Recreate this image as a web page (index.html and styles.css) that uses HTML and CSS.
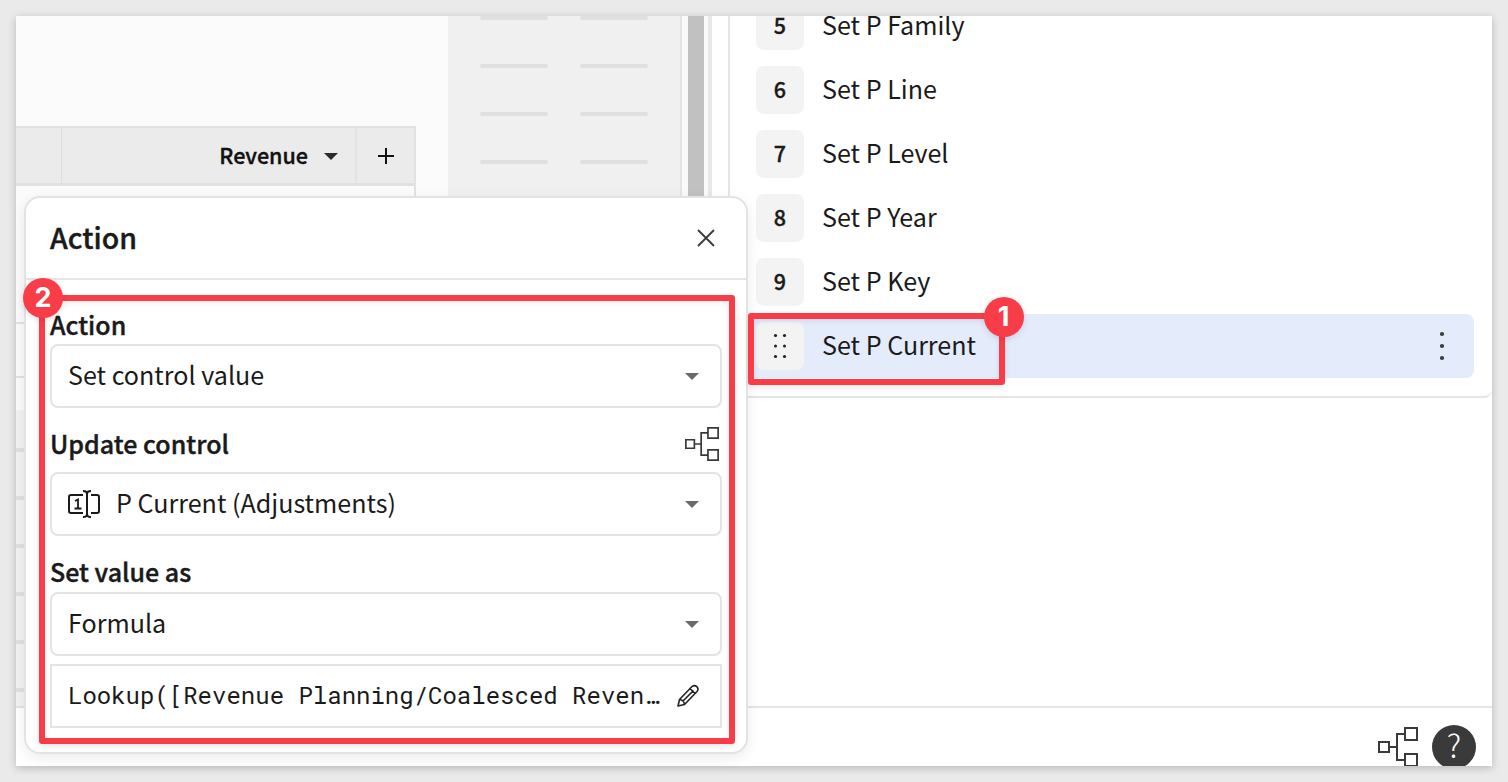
FILE: index.html
```html
<!DOCTYPE html>
<html lang="en">
<head>
<meta charset="utf-8">
<title>Workbook actions</title>
<link rel="stylesheet" href="styles.css">
</head>
<body>
<svg width="0" height="0" class="defs">
  <symbol id="caret" viewBox="0 0 14 7"><path d="M0 0h14L7 7z" fill="currentColor"/></symbol>
  <symbol id="lineage" viewBox="0 0 40 40"><path d="M1 15h10v10H1zM27 1h12v12H27zM27 27h12v12H27zM11 20h8M27 7h-8v26h8" fill="none" stroke="currentColor" stroke-width="2"/></symbol>
</svg>
<div class="frame">
  <div class="workspace">
    <div class="columns">
      <div class="canvas">
        <div class="table">
          <div class="thead">
            <div class="cell first"></div>
            <div class="cell name"><span>Revenue</span><svg class="caret dark"><use href="#caret"/></svg></div>
            <div class="cell add"><svg width="16" height="16" viewBox="0 0 16 16"><path d="M8 0v16M0 8h16" stroke="#111" stroke-width="2"/></svg></div>
          </div>
          <div class="tbody"><div class="row r1"></div><div class="row r2"></div></div>
        </div>
        <div class="ghost"><i></i><i></i><i></i><i></i><i></i><i></i></div>
      </div>
      <div class="skeleton">
        <i></i><i></i><i></i><i></i><i></i><i></i><i></i><i></i>
      </div>
      <div class="scroll"><div class="thumb"></div></div>
      <div class="gutter"></div>
    </div>
    <div class="tabs"></div>
  </div>
  <div class="panel">
    <div class="card">
      <div class="step"><b><em>5</em></b><span>Set P Family</span></div>
      <div class="step"><b><em>6</em></b><span>Set P Line</span></div>
      <div class="step"><b><em>7</em></b><span>Set P Level</span></div>
      <div class="step"><b><em>8</em></b><span>Set P Year</span></div>
      <div class="step"><b><em>9</em></b><span>Set P Key</span></div>
      <div class="step selected"><b><svg width="16" height="28" viewBox="0 0 16 28" fill="#222"><circle cx="3.5" cy="3.5" r="1.6"/><circle cx="12.500" cy="3.5" r="1.6"/><circle cx="3.500" cy="14" r="1.5"/><circle cx="12.500" cy="14" r="1.500"/><circle cx="3.5" cy="24.500" r="1.6"/><circle cx="12.500" cy="24.500" r="1.6"/></svg></b><span>Set P Current</span>
        <svg class="more" width="6" height="30" viewBox="0 0 6 30" fill="#3a3a3a"><circle cx="3" cy="3" r="2.1"/><circle cx="3" cy="15" r="2.1"/><circle cx="3" cy="27" r="2.1"/></svg></div>
    </div>
    <div class="blank"></div>
    <div class="status">
      <svg class="lineage-lg"><use href="#lineage"/></svg>
      <div class="help">?</div>
    </div>
  </div>
</div>

<div class="dialog">
  <div class="head"><h1>Action</h1><svg width="18" height="18" viewBox="0 0 18 18"><path d="M1 1l16 16M17 1L1 17" stroke="#3a3a3a" stroke-width="1.8"/></svg></div>
  <div class="form">
    <div class="label"><span>Action</span></div>
    <div class="field"><span>Set control value</span><svg class="caret"><use href="#caret"/></svg></div>
    <div class="label second"><span>Update control</span><svg class="lineage-sm"><use href="#lineage"/></svg></div>
    <div class="field"><svg class="ctl" width="34" height="28" viewBox="0 0 34 28" fill="none" stroke="#1a1a1a" stroke-width="2"><path d="M16 5H4Q2 5 2 7v14q0 2 2 2h12M24 5h6q2 0 2 2v14q0 2-2 2h-6M20 3v22M16 1q4 0 4 3 0-3 4-3M16 27q4 0 4-3 0 3 4 3"/><path d="M8 11l3-1.500V18M7.500 18.500h7" stroke-width="1.8"/></svg><span>P Current (Adjustments)</span><svg class="caret"><use href="#caret"/></svg></div>
    <div class="label third"><span>Set value as</span></div>
    <div class="field"><span>Formula</span><svg class="caret"><use href="#caret"/></svg></div>
    <div class="field formula"><span>Lookup([Revenue Planning/Coalesced Reven…</span>
      <svg width="24" height="24" viewBox="0 0 24 24" fill="none" stroke="#222" stroke-width="1.6" stroke-linejoin="round"><path d="M2 22l1.500-6.500L16 2.500q2.500-2 4.800.2t.2 4.800L8.500 20.500zM3.500 15.500q4.500.5 5 5M7 17L17.500 6.500M14 4.500l5 5"/></svg></div>
  </div>
</div>

<div class="mark mark-one"></div><div class="badge badge-one">1</div>
<div class="mark mark-two"></div><div class="badge badge-two">2</div>
</body>
</html>
```
FILE: styles.css
```css
* { box-sizing: border-box; }
body {
  margin: 0;
  padding: 16px;
  width: 1508px;
  height: 782px;
  overflow: hidden;
  background: #eaeaea;
  color: #1a1a1a;
  font-family: "Noto Sans CJK SC", "Noto Sans CJK JP", sans-serif;
}
.defs { position: absolute; }
body::before {
  content: "";
  position: absolute;
  inset: 16px;
  box-shadow: 0 2px 8px rgba(0, 0, 0, .22);
}
.frame {
  position: relative;
  display: flex;
  height: 750px;
  background: #fff;
  overflow: hidden;
}
.workspace { width: 714px; }
.columns { display: flex; height: 690px; overflow: hidden; }
.canvas { width: 432px; background: #fbfbfb; padding-top: 110px; }
.table { width: 400px; height: 284px; border: 2px solid #e2e2e2; border-width: 2px 2px 0 0; }
.thead { display: flex; height: 58px; background: #ebebeb; border-bottom: 3px solid #e1e1e1; }
.cell { display: flex; align-items: center; }
.first { width: 46px; border-right: 1px solid #dedede; }
.name { width: 295px; justify-content: flex-end; gap: 16px; padding-right: 17px; border-right: 2px solid #e3e3e3; font-size: 21.500px; font-weight: 500; color: #111; -webkit-text-stroke: .35px; }
.name span { padding-bottom: 3px; }
.add { flex: 1; justify-content: center; padding-left: 1px; }
.row { border-bottom: 2px solid #e2e2e2; }
.r1 { height: 138px; }
.r2 { height: 54px; }
.ghost { height: 296px; padding-top: 38px; background: #f2f2f2; display: flex; flex-direction: column; gap: 44px; }
.ghost i { width: 40px; height: 4px; flex: none; background: #e0e0e0; }
.tabs { height: 60px; border-top: 2px solid #e3e3e3; background: #fff; }
.skeleton {
  width: 234px;
  background: #f0f0f0;
  border-right: 2px solid #e5e5e5;
  display: grid;
  grid-template-columns: 68px 68px;
  grid-auto-rows: 4px;
  gap: 44px 32px;
  padding-left: 32px;
}
.skeleton i { background: #e0e0e0; border-radius: 2px; }
.scroll { width: 30px; background: #fafafa; padding-left: 6px; border-right: 4px solid #e8e8e8; }
.thumb { width: 16px; height: 100%; background: #c1c1c1; }
.gutter { width: 18px; background: #fff; border-right: 2px solid #e5e5e5; }
.panel { flex: 1; display: flex; flex-direction: column; }
.card {
  height: 382px;
  border-bottom: 2px solid #e5e5e5;
  border-bottom-right-radius: 8px;
  display: flex;
  flex-direction: column;
  justify-content: flex-end;
  padding: 0 18px 18px;
  overflow: hidden;
}
.step { display: flex; align-items: center; height: 64px; flex: none; padding-left: 8px; border-radius: 8px; font-size: 25.100px; }
.step > span { padding-bottom: 5px; line-height: 30px; }
.step b { width: 48px; height: 48px; margin-right: 18px; display: flex; align-items: center; justify-content: center; background: #f3f3f3; border-radius: 8px; font-size: 21.500px; font-weight: 500; -webkit-text-stroke: .35px; }
.step em { font-style: normal; line-height: 26px; padding-bottom: 3px; }
.selected { background: #e4ebfb; }
.more { margin-left: auto; margin-right: 29px; }
.blank { height: 308px; }
.status { border-top: 2px solid #e5e5e5; height: 60px; flex: none; display: flex; justify-content: flex-end; padding: 17px 16px 0 0; gap: 14px; }
.lineage-lg { width: 40px; height: 40px; margin-top: 2px; color: #3a3a3a; flex: none; }
.help { width: 44px; height: 44px; border-radius: 50%; background: #3a3a3a; color: #fff; font-size: 32px; font-weight: 300; line-height: 39px; text-align: center; }
.caret { width: 14px; height: 7px; color: #6b6b6b; flex: none; }
.caret.dark { color: #2b2b2b; margin-top: 1px; }

/* Floating editor above the workbook */
.dialog {
  position: absolute;
  left: 24px;
  top: 196px;
  width: 724px;
  height: 558px;
  background: #fff;
  border: 2px solid #e3e3e3;
  border-radius: 16px;
  box-shadow: 0 4px 14px rgba(0, 0, 0, .08);
}
.head { height: 82px; border-bottom: 2px solid #e5e5e5; display: flex; align-items: center; justify-content: space-between; padding: 0 31px 0 24px; }
h1 { margin: 0; padding-bottom: 4px; font-size: 28.500px; font-weight: 500; -webkit-text-stroke: .4px; }
.form { padding: 28px 24px 0; }
.label { height: 36px; display: flex; align-items: center; justify-content: space-between; font-size: 25px; font-weight: 500; -webkit-text-stroke: .4px; }
.label span { padding-bottom: 5px; }
.label.second { height: 64px; padding: 8px 2px 0 0; }
.label.second span { padding-bottom: 2px; }
.label.third { height: 56px; padding-top: 18px; }
.lineage-sm { width: 36px; height: 34px; color: #3a3a3a; }
.field { display: flex; align-items: center; height: 64px; padding: 0 21px 0 16px; border: 2px solid #e3e3e3; border-radius: 8px; font-size: 25.100px; }
.field span { padding-bottom: 5px; }
.field .caret { margin-left: auto; }
.ctl { margin: 0 15px 0 -1px; }
.formula { margin-top: 8px; padding-right: 20px; border-radius: 0; justify-content: space-between; font-family: "Roboto Mono", "Liberation Mono", monospace; font-size: 24px; white-space: pre; }
.formula span { padding-bottom: 2px; }

/* Numbered callouts */
.mark { position: absolute; border: 6px solid #f83d48; border-radius: 3px; box-shadow: 0 2px 6px rgba(0, 0, 0, .1), inset 0 2px 6px rgba(0, 0, 0, .08); }
.mark-one { left: 748px; top: 313px; width: 257px; height: 72px; }
.mark-two { left: 38.5px; top: 295px; width: 696.5px; height: 449px; }
.badge { position: absolute; width: 40px; height: 40px; border-radius: 50%; background: #f83d48; color: #fff; font: 700 27px/39px Inter, sans-serif; text-align: center; box-shadow: 0 2px 6px rgba(0, 0, 0, .12); }
.badge-one { left: 983.5px; top: 296.5px; }
.badge-two { left: 23px; top: 277.5px; }
```
